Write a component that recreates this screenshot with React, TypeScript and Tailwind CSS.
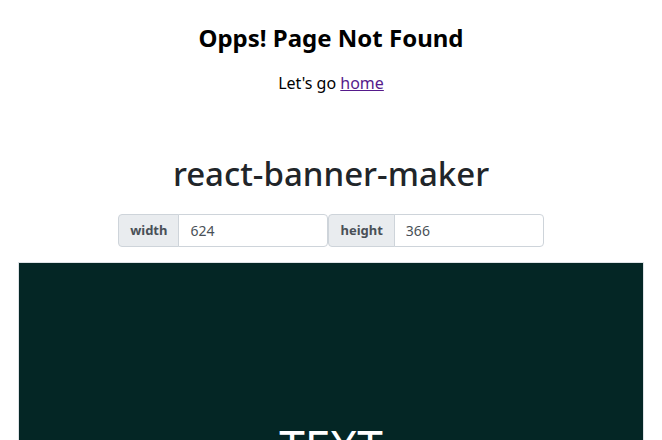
import { useState } from "react";

function SizeField({ label, value, onChange }: { label: string; value: number; onChange: (v: number) => void }) {
  return (
    <div className="flex h-[33px]">
      <span className="flex items-center px-[11px] bg-[#e9ecef] border border-[#ced4da] rounded-l-[4px] text-[13px] font-bold text-[#495057]">
        {label}
      </span>
      <input
        className="w-[150px] -ml-px px-[11px] border border-[#ced4da] rounded-r-[4px] text-[14px] text-[#495057] bg-white outline-none"
        value={value}
        onChange={(e) => onChange(Number(e.target.value) || 0)}
      />
    </div>
  );
}

export default function App() {
  const [width, setWidth] = useState(624);
  const [height, setHeight] = useState(366);

  return (
    <div className="min-h-screen bg-white font-['Noto_Sans',sans-serif] text-[#212529] flex flex-col items-center">
      <h2 className="mt-[20px] text-[24px] font-bold text-black leading-[36px]">Opps! Page Not Found</h2>
      <p className="mt-[15px] text-[16px] text-black leading-[24px]">
        Let's go{" "}
        <a href="#" className="text-[#551a8b] underline">
          home
        </a>
      </p>
      <h1 className="mt-[55px] text-[33px] font-medium leading-[48px]">react-banner-maker</h1>
      <div className="mt-[16px] flex">
        <SizeField label="width" value={width} onChange={setWidth} />
        <SizeField label="height" value={height} onChange={setHeight} />
      </div>
      <div
        className="mt-[15px] shrink-0 border border-[#dee2e6] bg-[#042625] flex items-center justify-center"
        style={{ width: width + 2, height: height + 2 }}
      >
        <span className="text-white text-[46px] font-normal">TEXT</span>
      </div>
    </div>
  );
}
